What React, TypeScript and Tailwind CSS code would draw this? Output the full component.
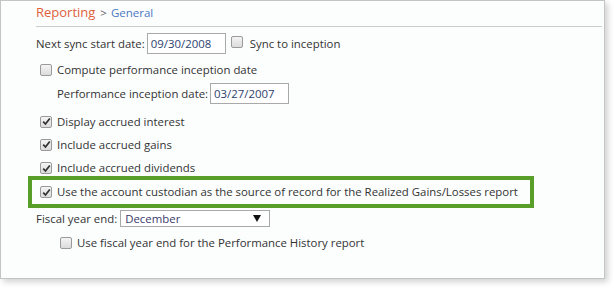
import React from "react";

function Box({ checked }: { checked?: boolean }) {
  return (
    <span className="inline-flex h-[12px] w-[12px] shrink-0 items-center justify-center rounded-[2px] border border-[#9a9a9a] bg-gradient-to-b from-[#f4f4f4] to-[#dcdcdc]">
      {checked && (
        <svg width="9" height="9" viewBox="0 0 9 9">
          <path d="M1.2 4.6 L3.5 7 L7.8 1.5" fill="none" stroke="#333" strokeWidth="1.8" />
        </svg>
      )}
    </span>
  );
}

function Field({ value, w }: { value: string; w: string }) {
  return (
    <span className={`inline-flex h-[21px] items-center border border-[#a9a9a9] bg-white px-[3px] text-[#2d3f6e] ${w}`}>
      {value}
    </span>
  );
}

export default function App() {
  return (
    <div className="h-[288px] w-[614px] bg-white text-[11.4px] text-[#333] [font-family:'Open_Sans',sans-serif]">
      <div className="flex h-[279px] w-[605px] flex-col border border-[#c4c4c4] bg-[#fcfefe] shadow-[3px_3px_6px_rgba(0,0,0,0.18)]">
        <div className="ml-[35px] mr-[2px] flex h-[26px] items-center border-b border-[#cccccc] pb-[1px]">
          <span className="text-[13px] text-[#e0603c]">Reporting</span>
          <span className="ml-[5px] text-[11.5px] text-[#666]">&gt;</span>
          <span className="ml-[4px] text-[11.5px] text-[#4a78c2]">General</span>
        </div>

        <div className="ml-[35px] mt-[6px] flex h-[21px] items-center">
          <span>Next sync start date:</span>
          <span className="ml-[2px]"><Field value="09/30/2008" w="w-[79px]" /></span>
          <span className="ml-[5px]"><Box /></span>
          <span className="ml-[7px]">Sync to inception</span>
        </div>

        <div className="ml-[39px] mt-[4px] flex h-[24px] items-center">
          <Box />
          <span className="ml-[5px]">Compute performance inception date</span>
        </div>

        <div className="ml-[56px] mt-[1px] flex h-[21px] items-center">
          <span>Performance inception date:</span>
          <span className="ml-[2px]"><Field value="03/27/2007" w="w-[79px]" /></span>
        </div>

        <div className="ml-[39px] mt-[6px] flex h-[23px] items-center">
          <Box checked />
          <span className="ml-[5px]">Display accrued interest</span>
        </div>
        <div className="ml-[39px] flex h-[23px] items-center">
          <Box checked />
          <span className="ml-[5px]">Include accrued gains</span>
        </div>
        <div className="ml-[39px] flex h-[20px] items-center pt-[4px]">
          <Box checked />
          <span className="ml-[5px]">Include accrued dividends</span>
        </div>

        <div className="ml-[27px] flex h-[32px] w-[506px] items-center border-4 border-[#5a9e2a] pl-[8px]">
          <Box checked />
          <span className="ml-[5px] whitespace-nowrap">
            Use the account custodian as the source of record for the Realized Gains/Losses report
          </span>
        </div>

        <div className="ml-[35px] mt-[2px] flex h-[17px] items-center">
          <span>Fiscal year end:</span>
          <span className="ml-[3px] flex h-[17px] w-[150px] items-center justify-between border border-[#a9a9a9] bg-white pl-[4px] pr-[8px] text-[#3b3a6b]">
            December
            <svg width="8" height="7" viewBox="0 0 8 7">
              <path d="M0 0 H8 L4 7 Z" fill="#111" />
            </svg>
          </span>
        </div>

        <div className="ml-[59px] mt-[6px] flex h-[20px] items-center">
          <Box />
          <span className="ml-[5px]">Use fiscal year end for the Performance History report</span>
        </div>
      </div>
    </div>
  );
}
